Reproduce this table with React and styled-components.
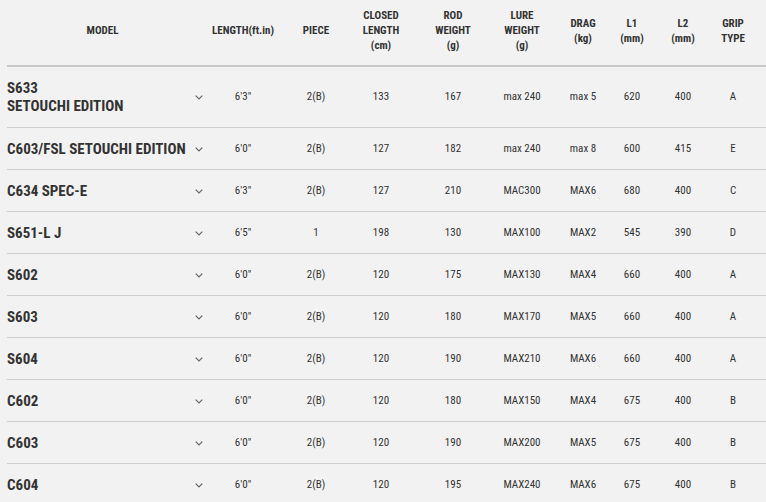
import React from 'react'
import styled, { createGlobalStyle } from 'styled-components'

const GlobalStyle = createGlobalStyle`
body {
  margin: 0;
  background: #f2f2f2;
  font-family: "Roboto Condensed", Roboto, "Liberation Sans Narrow", sans-serif;
  font-stretch: condensed;
  color: #333;
  overflow: hidden;
}
`

const COLS = '184px 15px 74px 72px 58px 86px 52px 70px 28px 74px 26px 20px'

const Wrap = styled.div`
padding-left: 7px;
`
const Head = styled.div`
display: grid;
grid-template-columns: ${COLS};
height: 61px;
padding-bottom: 4px;
border-bottom: 2px solid #c9c9c9;
align-items: center;
`
const HeadCell = styled.div`
grid-column: ${props => props.span || 'auto'};
text-align: center;
font-weight: 700;
font-size: 11px;
line-height: 15px;
white-space: nowrap;
color: #333;
padding-right: ${props => props.shift || 0}px;
`
const Row = styled.div`
display: grid;
grid-template-columns: ${COLS};
align-items: center;
border-bottom: 1px solid #cfcfcf;
padding: 12px 0 ${props => props.tall ? 12 : 11}px;
`
const Model = styled.div`
font-weight: 700;
font-size: 15px;
line-height: 18px;
color: #333;
white-space: nowrap;
`
const Chevron = styled.div`
display: flex;
justify-content: center;
align-items: center;
`
const Cell = styled.div`
text-align: center;
font-size: 11px;
line-height: 18px;
white-space: nowrap;
color: #333;
`

const rows = [
    ['S633\nSETOUCHI EDITION', '6\'3"', '2(B)', '133', '167', 'max 240', 'max 5', '620', '400', 'A'],
    ['C603/FSL SETOUCHI EDITION', '6\'0"', '2(B)', '127', '182', 'max 240', 'max 8', '600', '415', 'E'],
    ['C634 SPEC-E', '6\'3"', '2(B)', '127', '210', 'MAC300', 'MAX6', '680', '400', 'C'],
    ['S651-L J', '6\'5"', '1', '198', '130', 'MAX100', 'MAX2', '545', '390', 'D'],
    ['S602', '6\'0"', '2(B)', '120', '175', 'MAX130', 'MAX4', '660', '400', 'A'],
    ['S603', '6\'0"', '2(B)', '120', '180', 'MAX170', 'MAX5', '660', '400', 'A'],
    ['S604', '6\'0"', '2(B)', '120', '190', 'MAX210', 'MAX6', '660', '400', 'A'],
    ['C602', '6\'0"', '2(B)', '120', '180', 'MAX150', 'MAX4', '675', '400', 'B'],
    ['C603', '6\'0"', '2(B)', '120', '190', 'MAX200', 'MAX5', '675', '400', 'B'],
    ['C604', '6\'0"', '2(B)', '120', '195', 'MAX240', 'MAX6', '675', '400', 'B'],
]

const headers = [
    ['LENGTH(ft.in)'],
    ['PIECE'],
    ['CLOSED', 'LENGTH', '(cm)'],
    ['ROD', 'WEIGHT', '(g)'],
    ['LURE', 'WEIGHT', '(g)'],
    ['DRAG', '(kg)'],
    ['L1', '(mm)'],
    ['L2', '(mm)'],
    ['GRIP', 'TYPE'],
]

const ChevronIcon = () => (
    <svg width="8" height="5" viewBox="0 0 8 5">
        <polyline points="0.7,0.7 4,4 7.3,0.7" fill="none" stroke="#666" strokeWidth="1.2" />
    </svg>
)

const App = () => {
    return (
        <Wrap>
            <GlobalStyle />
            <Head>
                <HeadCell span="1 / 3" shift={8}>MODEL</HeadCell>
                {headers.map((h, i) => (
                    <HeadCell key={i}>
                        {h.map((line, j) => <div key={j}>{line}</div>)}
                    </HeadCell>
                ))}
            </Head>
            {rows.map((r, i) => (
                <Row key={i} tall={r[0].includes('\n')}>
                    <Model>
                        {r[0].split('\n').map((line, j) => <div key={j}>{line}</div>)}
                    </Model>
                    <Chevron><ChevronIcon /></Chevron>
                    {r.slice(1).map((v, j) => <Cell key={j}>{v}</Cell>)}
                </Row>
            ))}
        </Wrap>
    )
}

export default App
